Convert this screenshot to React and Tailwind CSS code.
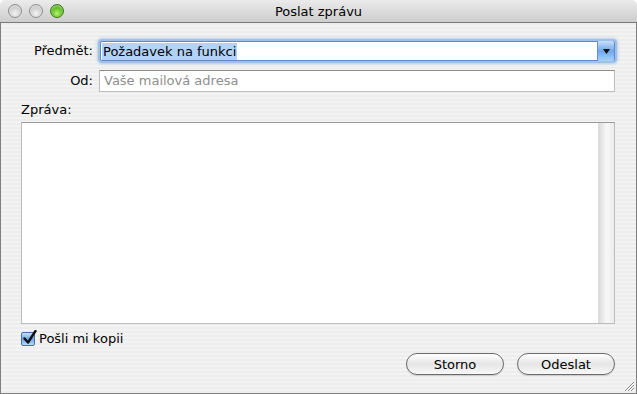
import React from "react";

const font = "font-['Lucida_Grande','DejaVu_Sans',sans-serif]";

function Light({ green }) {
  return (
    <span
      className={
        green
          ? "h-[14px] w-[14px] rounded-full border border-[#3f7a12] bg-[radial-gradient(circle_at_50%_70%,#b8f07a_0%,#6cc62c_45%,#3e8d14_100%)] shadow-[inset_0_1px_2px_rgba(255,255,255,0.6)]"
          : "h-[14px] w-[14px] rounded-full border border-[#8f8f8f] bg-[radial-gradient(circle_at_50%_70%,#f4f4f4_0%,#d2d2d2_50%,#a8a8a8_100%)] shadow-[inset_0_1px_2px_rgba(255,255,255,0.7)]"
      }
    />
  );
}

export default function App() {
  return (
    <div className={`flex h-[394px] w-[637px] flex-col overflow-hidden bg-white ${font} text-[13px] text-black`}>
      {/* title bar */}
      <div className="relative flex h-[23px] shrink-0 items-center rounded-t-[5px] border-b border-[#7b7b7b] bg-gradient-to-b from-[#ebebeb] via-[#dcdcdc] to-[#cdcdcd] px-[8px]">
        <div className="flex gap-[7px]">
          <Light />
          <Light />
          <Light green />
        </div>
        <div className="absolute inset-x-0 top-0 flex h-[22px] items-center justify-center leading-none">
          Poslat zprávu
        </div>
      </div>

      {/* body */}
      <div className="relative flex flex-1 flex-col border-x border-b border-[#7f7f7f] bg-[repeating-linear-gradient(180deg,#ededed_0px,#ededed_2px,#f3f3f3_2px,#f3f3f3_4px)] pl-[20px] pr-[21px] pt-[17px]">
        {/* subject */}
        <div className="flex h-[22px] items-center">
          <div className="w-[72px] text-right">Předmět:</div>
          <div className="ml-[7px] flex h-[20px] flex-1 items-center rounded-[2px] border border-[#5d8ac4] bg-white shadow-[0_0_0_2px_#9ec0ea,0_0_3px_3px_rgba(120,165,225,0.45)]">
            <span className="ml-[1px] bg-[#b3d2f7] px-[1px] leading-[17px]">Požadavek na funkci</span>
            <div className="ml-auto flex h-[20px] w-[17px] items-center justify-center rounded-r-[2px] border-l border-[#6a8fc0] bg-gradient-to-b from-[#c9e0fb] via-[#6fa7ea] to-[#a7d2ff]">
              <svg width="7" height="5" viewBox="0 0 7 5"><path d="M0 0h7L3.5 5z" fill="#111" /></svg>
            </div>
          </div>
        </div>

        {/* from */}
        <div className="mt-[8px] flex h-[22px] items-center">
          <div className="w-[72px] text-right">Od:</div>
          <div className="ml-[6px] flex h-[22px] flex-1 items-center border border-[#bdbdbd] border-t-[#8c8c8c] bg-white pl-[4px] text-[#8e8e8e]">
            Vaše mailová adresa
          </div>
        </div>

        {/* message */}
        <div className="mt-[10px] h-[16px] leading-[16px]">Zpráva:</div>
        <div className="mt-[4px] flex h-[202px] border border-[#bdbdbd] border-t-[#9a9a9a] bg-white">
          <div className="flex-1" />
          <div className="w-[16px] border-l border-[#d9d9d9] bg-gradient-to-r from-[#dcdcdc] via-[#f7f7f7] to-[#ececec]" />
        </div>

        {/* copy checkbox */}
        <div className="mt-[7px] flex h-[16px] items-center">
          <div className="relative h-[14px] w-[14px] rounded-[2px] border border-[#4e6f9c] bg-gradient-to-b from-[#c6dffb] via-[#6da5e8] to-[#b5dbff]">
            <svg className="absolute -top-[3px] left-[1px]" width="14" height="15" viewBox="0 0 14 15">
              <path d="M1.5 8.5 L5 12.5 L12.5 1" fill="none" stroke="#111" strokeWidth="2.4" strokeLinecap="round" strokeLinejoin="round" />
            </svg>
          </div>
          <span className="ml-[4px]">Pošli mi kopii</span>
        </div>

        {/* buttons */}
        <div className="mt-[6px] flex justify-end gap-[13px]">
          <button className="h-[22px] w-[98px] rounded-full border border-[#6b6b6b] bg-gradient-to-b from-[#ffffff] via-[#e6e6e6] to-[#f8f8f8] leading-none shadow-[0_1px_1px_rgba(0,0,0,0.15)]">
            Storno
          </button>
          <button className="h-[22px] w-[98px] rounded-full border border-[#6b6b6b] bg-gradient-to-b from-[#ffffff] via-[#e6e6e6] to-[#f8f8f8] leading-none shadow-[0_1px_1px_rgba(0,0,0,0.15)]">
            Odeslat
          </button>
        </div>

        {/* resize grip */}
        <svg className="absolute bottom-[1px] right-[1px]" width="12" height="12" viewBox="0 0 12 12">
          <path d="M11 2L2 11M11 5L5 11M11 8L8 11" stroke="#8a8a8a" strokeWidth="1" />
          <path d="M11 3L3 11M11 6L6 11M11 9L9 11" stroke="#ffffff" strokeWidth="1" />
        </svg>
      </div>
    </div>
  );
}
